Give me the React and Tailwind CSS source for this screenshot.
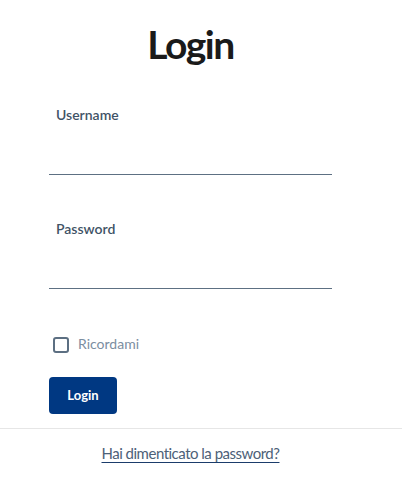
export default function App() {
  return (
    <div className="w-full min-h-[503px] bg-white font-['Lato',sans-serif]">
      <div className="pl-[49px] pr-[70px]">
        <h1 className="pt-[21px] text-center text-[39px] leading-[47px] font-bold tracking-[-1.5px] text-[#1a1a1a]">
          Login
        </h1>

        <label className="block mt-[38px] pl-[7px] text-[14px] leading-[17px] font-semibold text-[#3f5366]">
          Username
        </label>
        <div className="h-[52px] border-b border-[#5d7083]"></div>

        <label className="block mt-[45px] pl-[7px] text-[14px] leading-[17px] font-semibold text-[#3f5366]">
          Password
        </label>
        <div className="h-[52px] border-b border-[#5d7083]"></div>

        <div className="mt-[46px] flex items-center pl-[4px]">
          <span className="block w-[16px] h-[16px] rounded-[3px] border-2 border-[#5c6f82]"></span>
          <span className="ml-[9px] pb-[3px] text-[14px] leading-[17px] text-[#7b8ea1]">Ricordami</span>
        </div>

        <button className="mt-[22px] flex items-center justify-center w-[68px] h-[37px] rounded-[4px] bg-[#003882] text-white text-[13px] font-bold">
          Login
        </button>
      </div>

      <div className="mt-[14px] border-t border-[#e6e6e6]"></div>

      <div className="pl-[49px] pr-[70px] pt-[12px] text-center">
        <a className="text-[15px] leading-[18px] tracking-[-0.5px] text-[#4d6178] underline decoration-[#1b3c6b] underline-offset-[3px]">
          Hai dimenticato la password?
        </a>
      </div>
    </div>
  );
}
